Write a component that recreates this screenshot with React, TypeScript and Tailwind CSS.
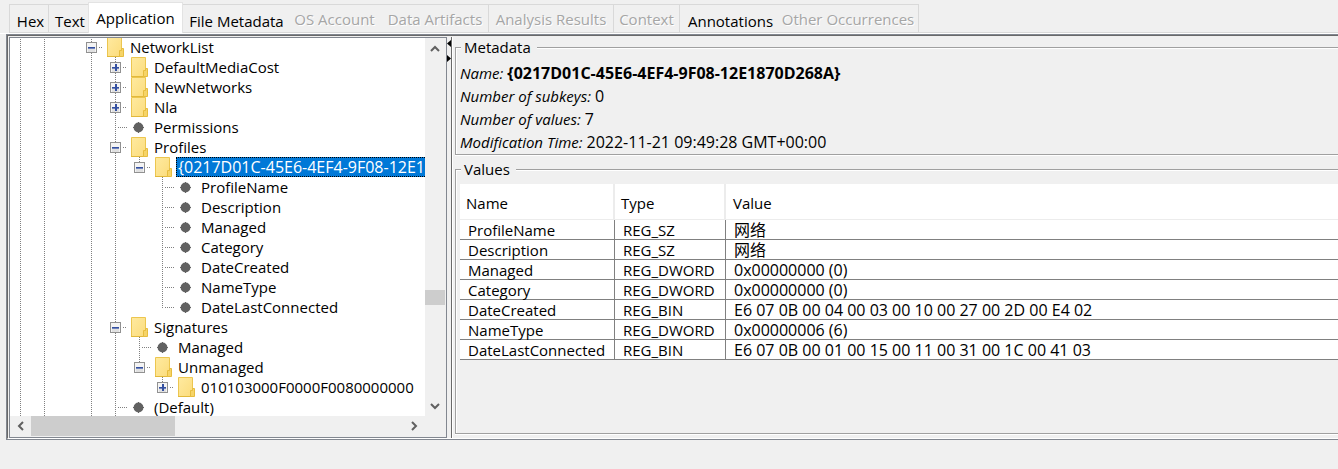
import React from "react";

type TabInfo = { label: string; width: string; state: "enabled" | "disabled" | "selected"; divider?: boolean };

const tabs: TabInfo[] = [
  { label: "Hex", width: "w-[40px]", state: "enabled", divider: true },
  { label: "Text", width: "w-[39px]", state: "enabled" },
  { label: "Application", width: "w-[95px]", state: "selected" },
  { label: "File Metadata", width: "w-[104px]", state: "enabled" },
  { label: "OS Account", width: "w-[95px]", state: "disabled" },
  { label: "Data Artifacts", width: "w-[107px]", state: "disabled", divider: true },
  { label: "Analysis Results", width: "w-[125px]", state: "disabled", divider: true },
  { label: "Context", width: "w-[66px]", state: "disabled", divider: true },
  { label: "Annotations", width: "w-[98px]", state: "enabled" },
  { label: "Other Occurrences", width: "w-[141px]", state: "disabled", divider: true },
];

const tabStyles = {
  enabled: "mt-0.5 border-t border-[#d9d9d9] pt-1 pl-[3px] text-black",
  disabled: "mt-0.5 border-t border-[#d9d9d9] text-[#a6a6a6] [text-shadow:1px_1px_0_#fff]",
  selected: "border-x border-t border-[#e3e3e3] bg-white text-black",
};

function Tabs() {
  return (
    <div role="tablist" className="flex border-b border-white pt-0.5 pl-[9px]">
      {tabs.map((tab, i) => (
        <button
          key={tab.label}
          type="button"
          role="tab"
          aria-selected={tab.state === "selected"}
          disabled={tab.state === "disabled"}
          className={[
            "flex shrink-0 items-center justify-center whitespace-nowrap leading-5",
            tab.width,
            tabStyles[tab.state],
            tab.state === "selected" ? "h-[31px]" : "h-[29px] border-b",
            tab.divider ? "border-r" : "",
            i === 0 ? "border-l" : "",
          ].join(" ")}
        >
          {tab.label}
        </button>
      ))}
      <div className="flex-1 border-b border-[#d9d9d9]" />
    </div>
  );
}

/* Centre of the handle column for each depth, measured from the tree's left edge. */
const columns = [10, 34, 58, 81, 105, 129, 152];

type Guide = [x: number, from: number, to: number];
type Node = {
  label: string;
  depth: number;
  kind: "open" | "closed" | "leaf";
  selected?: boolean;
  guides?: Guide[];
};

const full = (x: number): Guide => [x, 0, 20];
const half = (x: number): Guide => [x, 0, 11];

const nodes: Node[] = [
  { label: "NetworkList", depth: 3, kind: "open" },
  { label: "DefaultMediaCost", depth: 4, kind: "closed" },
  { label: "NewNetworks", depth: 4, kind: "closed" },
  { label: "Nla", depth: 4, kind: "closed" },
  { label: "Permissions", depth: 4, kind: "leaf" },
  { label: "Profiles", depth: 4, kind: "open" },
  { label: "{0217D01C-45E6-4EF4-9F08-12E1870D268A}", depth: 5, kind: "open", selected: true, guides: [full(105), half(129)] },
  ...["ProfileName", "Description", "Managed", "Category", "DateCreated", "NameType"].map(
    (label): Node => ({ label, depth: 6, kind: "leaf", guides: [full(105), full(152)] }),
  ),
  { label: "DateLastConnected", depth: 6, kind: "leaf", guides: [full(105), half(152)] },
  { label: "Signatures", depth: 4, kind: "open" },
  { label: "Managed", depth: 5, kind: "leaf", guides: [full(105), full(129)] },
  { label: "Unmanaged", depth: 5, kind: "open", guides: [full(105), half(129)] },
  { label: "010103000F0000F0080000000", depth: 6, kind: "closed", guides: [full(105), half(152)] },
  { label: "(Default)", depth: 4, kind: "leaf" },
];

function Guides({ node }: { node: Node }) {
  const x = columns[node.depth];
  const extra = node.guides ?? (node.depth >= 4 ? [full(105)] : []);
  const lines = [full(10), full(34), full(81), ...extra];
  const width = x + 16;
  return (
    <svg width={width} height="20" viewBox={`0 0 ${width} 20`} className="shrink-0" shapeRendering="crispEdges" aria-hidden="true">
      <g stroke="#808080" strokeDasharray="1 1">
        {lines.map(([lx, from, to]) => (
          <path key={lx} d={`M${lx + 0.5} ${from}V${to}`} />
        ))}
        <path d={node.kind === "leaf" ? `M${x + 3} 10.5h9` : `M${x + 8} 10.5h4`} />
      </g>
      {node.kind !== "leaf" && (
        <g>
          <rect x={x - 4.5} y="5.5" width="10" height="10" fill="#f4f4f4" stroke="#919191" />
          <rect x={x - 3} y="11" width="7" height="4" fill="#e0e0e0" />
          <rect x={x - 3} y="10" width="7" height="1" fill="#3450a0" />
          <rect x={x - 3} y="11" width="7" height="1" fill="#6f83bd" />
          {node.kind === "closed" && <rect x={x} y="7" width="2" height="7" fill="#3450a0" />}
        </g>
      )}
    </svg>
  );
}

function FolderIcon() {
  return (
    <svg width="17" height="20" viewBox="0 0 17 20" className="shrink-0" aria-hidden="true">
      <defs>
        <linearGradient id="folder" x1="0" y1="0" x2="1" y2="1">
          <stop offset="0" stopColor="#ffeaa0" />
          <stop offset="1" stopColor="#fbdc7c" />
        </linearGradient>
      </defs>
      <path d="M0.5 0.5H14.5V19.5H0.5Z" fill="url(#folder)" stroke="#ecc650" />
      <path d="M0 19.5H16" stroke="#e2b93b" />
      <path d="M14.5 11.5H16.5V19.5H12.5V13.5H14.5Z" fill="#f6d468" stroke="#e6bd3f" />
    </svg>
  );
}

function LeafIcon() {
  return (
    <svg width="17" height="20" viewBox="0 0 17 20" className="shrink-0" aria-hidden="true">
      <circle cx="7.5" cy="10.5" r="4.9" fill="#616161" />
      <path d="M2 10.5H13M7.5 5V16" stroke="#616161" />
    </svg>
  );
}

function Tree() {
  return (
    <ul role="tree" aria-label="Registry keys" className="-mt-px min-w-0">
      {nodes.map((node, i) => (
        <li
          key={i}
          role="treeitem"
          aria-level={node.depth}
          aria-selected={!!node.selected}
          aria-expanded={node.kind === "leaf" ? undefined : node.kind === "open"}
          className="flex h-5 whitespace-nowrap leading-5"
        >
          <Guides node={node} />
          {node.kind === "leaf" ? <LeafIcon /> : <FolderIcon />}
          {node.selected ? (
            <span className="ml-1 h-5 border border-dotted border-black bg-[#0078d7] pl-px text-base leading-[18px] text-white">
              {node.label}
            </span>
          ) : (
            <span className="ml-1 pl-0.5">{node.label}</span>
          )}
        </li>
      ))}
    </ul>
  );
}

function ScrollButton({ label, path, className }: { label: string; path: string; className: string }) {
  return (
    <button type="button" aria-label={label} className={`flex shrink-0 items-center justify-center ${className}`}>
      <svg width="10" height="10" viewBox="0 0 10 10" fill="none" stroke="#606060" strokeWidth="2" aria-hidden="true">
        <path d={path} />
      </svg>
    </button>
  );
}

function TreePane() {
  return (
    <section className="flex w-[438px] shrink-0 flex-col border border-[#828790] bg-[#f0f0f0]">
      <div className="flex min-h-0 flex-1">
        <div className="min-w-0 flex-1 overflow-hidden bg-white">
          <Tree />
        </div>
        <div className="flex w-[21px] shrink-0 flex-col pr-px">
          <ScrollButton label="Scroll up" path="M1 7L5 3L9 7" className="h-[21px]" />
          <div className="flex flex-1 flex-col">
            <div className="grow-[231]" />
            <div className="h-[15px] bg-[#cdcdcd]" />
            <div className="grow-[90]" />
          </div>
          <ScrollButton label="Scroll down" path="M1 3L5 7L9 3" className="h-[21px]" />
        </div>
      </div>
      <div className="flex h-[21px] shrink-0 pr-[22px] pb-px">
        <ScrollButton label="Scroll left" path="M7 1L3 5L7 9" className="w-[21px]" />
        <div className="w-36 bg-[#cdcdcd]" />
        <div className="flex-1" />
        <ScrollButton label="Scroll right" path="M3 1L7 5L3 9" className="w-[21px]" />
      </div>
    </section>
  );
}

function Splitter() {
  return (
    <div className="flex w-[5px] shrink-0 flex-col gap-2 border-r border-[#696969] pt-[3px]">
      <button type="button" aria-label="Collapse left pane">
        <svg width="4" height="7" viewBox="0 0 4 7" className="block" aria-hidden="true">
          <path d="M4 0V7L0 3.5Z" />
        </svg>
      </button>
      <button type="button" aria-label="Collapse right pane">
        <svg width="4" height="7" viewBox="0 0 4 7" className="block" aria-hidden="true">
          <path d="M0 0V7L4 3.5Z" />
        </svg>
      </button>
    </div>
  );
}

const metadata = [
  { label: "Name:", value: "{0217D01C-45E6-4EF4-9F08-12E1870D268A}", bold: true },
  { label: "Number of subkeys:", value: "0" },
  { label: "Number of values:", value: "7" },
  { label: "Modification Time:", value: "2022-11-21 09:49:28 GMT+00:00" },
];

const values = [
  ["ProfileName", "REG_SZ", "网络"],
  ["Description", "REG_SZ", "网络"],
  ["Managed", "REG_DWORD", "0x00000000 (0)"],
  ["Category", "REG_DWORD", "0x00000000 (0)"],
  ["DateCreated", "REG_BIN", "E6 07 0B 00 04 00 03 00 10 00 27 00 2D 00 E4 02"],
  ["NameType", "REG_DWORD", "0x00000006 (6)"],
  ["DateLastConnected", "REG_BIN", "E6 07 0B 00 01 00 15 00 11 00 31 00 1C 00 41 03"],
];

const groupClass =
  "min-w-0 border border-r-0 border-[#a0a0a0] pt-[5px] pl-1 shadow-[inset_1px_1px_0_#fff,0_1px_0_#fff]";
const legendClass = "ml-px bg-[#f0f0f0] pr-1.5 pl-[3px] leading-5";

function DetailsPane() {
  return (
    <section className="flex min-w-0 flex-1 flex-col gap-1 border-l border-white pb-1 pl-0.5">
      <fieldset className={groupClass}>
        <legend className={legendClass}>Metadata</legend>
        <dl className="leading-[23px]">
          {metadata.map((item) => (
            <div key={item.label} className="flex gap-1 whitespace-nowrap">
              <dt className="italic">{item.label}</dt>
              <dd className={item.bold ? "text-base leading-[23px] font-bold" : "text-base leading-[23px]"}>{item.value}</dd>
            </div>
          ))}
        </dl>
      </fieldset>
      <fieldset className={`${groupClass} flex-1`}>
        <legend className={legendClass}>Values</legend>
        <table className="w-full table-fixed border-separate border-spacing-0 bg-white text-left">
          <colgroup>
            <col className="w-[155px]" />
            <col className="w-[111px]" />
            <col />
          </colgroup>
          <thead>
            <tr className="h-9">
              <th className="border-r-2 border-b border-[#ececec] p-0 pt-1 pl-1.5 font-normal">Name</th>
              <th className="border-r-2 border-b border-[#ececec] p-0 pt-1 pl-1.5 font-normal">Type</th>
              <th className="border-b border-[#ececec] p-0 pt-1 pl-[7px] font-normal">Value</th>
            </tr>
          </thead>
          <tbody>
            {values.map(([name, type, value]) => (
              <tr key={name} className="h-5 leading-[18px] whitespace-nowrap">
                <td className="border-r border-b border-[#808080] p-0 pt-px pl-2">{name}</td>
                <td className="border-r border-b border-[#808080] p-0 pt-px pl-2">{type}</td>
                <td className="border-b border-[#808080] p-0 pt-px pl-2 text-base leading-[18px]">{value}</td>
              </tr>
            ))}
          </tbody>
        </table>
      </fieldset>
    </section>
  );
}

export default function App() {
  return (
    <main className="flex h-screen flex-col overflow-hidden bg-[#f0f0f0] pb-[29px] font-['Open_Sans','Noto_Sans_CJK_SC',sans-serif] text-[15px] text-black">
      <Tabs />
      <div className="ml-1.5 flex min-h-0 flex-1 border-y border-l border-[#828790]">
        <div className="flex min-w-0 flex-1 border-t border-b border-l border-t-[#696969] border-b-white border-l-[#696969] pt-px pl-px">
          <TreePane />
          <Splitter />
          <DetailsPane />
        </div>
      </div>
    </main>
  );
}
